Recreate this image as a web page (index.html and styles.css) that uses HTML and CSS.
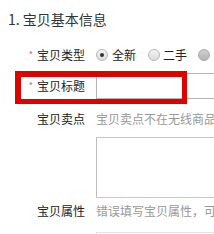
FILE: index.html
```html
<!DOCTYPE html>
<html lang="zh-CN">
<head>
<meta charset="utf-8">
<title>宝贝基本信息</title>
<link rel="stylesheet" href="styles.css">
</head>
<body>
<div class="page">
  <h1 class="title">1. 宝贝基本信息</h1>
  <div class="form">
    <div class="row row-type">
      <div class="label"><span class="req">*</span>宝贝类型</div>
      <div class="field radios">
        <span class="radio radio-on"></span><span class="opt">全新</span>
        <span class="radio"></span><span class="opt">二手</span>
        <span class="radio radio-off"></span>
      </div>
    </div>
    <div class="row row-title">
      <div class="label"><span class="req">*</span>宝贝标题</div>
      <div class="field"><div class="input"></div></div>
      <div class="highlight"></div>
    </div>
    <div class="row row-sell">
      <div class="label">宝贝卖点</div>
      <div class="field">
        <div class="hint">宝贝卖点不在无线商品详情页中显示</div>
        <div class="textarea"></div>
      </div>
    </div>
    <div class="row row-attr">
      <div class="label">宝贝属性</div>
      <div class="field">
        <div class="hint">错误填写宝贝属性，可能会引起宝贝下架或搜索流量减少</div>
        <div class="attr-box"></div>
      </div>
    </div>
  </div>
</div>
</body>
</html>
```
FILE: styles.css
```css
html, body {
  margin: 0;
  padding: 0;
  background: #fff;
  overflow: hidden;
}
body {
  width: 214px;
  height: 234px;
  font-family: "Noto Sans CJK SC", "Liberation Sans", sans-serif;
  color: #333;
}
.page {
  width: 700px;
  padding: 9px 0 0 8px;
}
.title {
  margin: 0;
  font-size: 14px;
  line-height: 20px;
  font-weight: normal;
  color: #333;
}
.form {
  display: flex;
  flex-direction: column;
}
.row {
  display: grid;
  grid-template-columns: 77px 1fr;
  column-gap: 11px;
  position: relative;
}
.label {
  text-align: right;
  font-size: 12px;
  line-height: 20px;
  color: #222;
  white-space: nowrap;
}
.req {
  color: #e8626b;
  font-size: 9px;
  margin-right: 4px;
  vertical-align: 2px;
}
.field {
  font-size: 12px;
  line-height: 20px;
  white-space: nowrap;
}
.row-type { margin-top: 16px; }
.radios {
  display: flex;
  align-items: center;
  height: 20px;
}
.radio {
  width: 10px;
  height: 10px;
  border-radius: 50%;
  border: 1px solid #b8b8b8;
  background: linear-gradient(#f4f4f4, #dcdcdc);
  box-sizing: content-box;
  position: relative;
}
.radio-on::after {
  content: "";
  position: absolute;
  left: 3px;
  top: 3px;
  width: 4px;
  height: 4px;
  border-radius: 50%;
  background: #333;
}
.radio-off {
  background: linear-gradient(#cfcfcf, #b4b4b4);
  border-color: #aaa;
}
.opt {
  margin-left: 4px;
  margin-right: 12px;
  color: #222;
}
.radio + .opt + .radio + .opt { margin-left: 3px; margin-right: 11px; }
.row-title {
  margin-top: 8px;
  align-items: center;
}
.row-title .label { line-height: 26px; }
.input {
  height: 24px;
  border: 1px solid #b5b5b5;
  background: #fff;
}
.highlight {
  position: absolute;
  left: 7px;
  top: -2px;
  width: 161px;
  height: 22px;
  border: 5px solid #e00000;
  border-left-width: 6px;
  border-top-width: 6px;
  pointer-events: none;
}
.row-sell { margin-top: 10px; }
.hint { color: #999; }
.textarea {
  margin-top: 8px;
  height: 59px;
  border: 1px solid #c8c8c8;
  border-left-color: #bdbdbd;
}
.row-attr { margin-top: 3px; }
.attr-box {
  margin-top: 11px;
  height: 30px;
  border: 1px solid #e4e4e4;
}
```
